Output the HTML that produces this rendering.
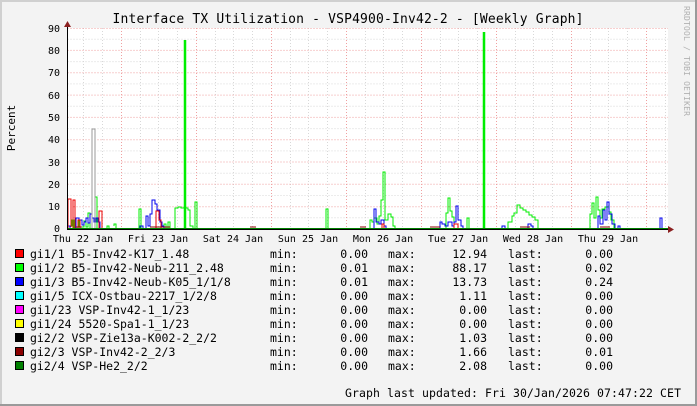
<!DOCTYPE html>
<html><head><meta charset="utf-8"><style>
html,body{margin:0;padding:0;background:#f3f3f3}
svg{display:block}
text{font-family:"DejaVu Sans Mono","Liberation Mono",monospace;fill:#000}
</style></head><body>
<svg width="697" height="406" xmlns="http://www.w3.org/2000/svg">
<rect x="0" y="0" width="697" height="406" fill="#f3f3f3"/>
<rect x="0" y="0" width="697" height="2" fill="#d0d0d0"/>
<rect x="0" y="0" width="2" height="406" fill="#d0d0d0"/>
<rect x="0" y="404" width="697" height="2" fill="#9a9a9a"/>
<rect x="695" y="0" width="2" height="406" fill="#9a9a9a"/>
<rect x="67" y="28" width="601" height="201" fill="#fff"/>
<g stroke="#d8d8d8" stroke-dasharray="1,2" stroke-width="1">
<path d="M67.5 217.8H668M67.5 195.5H668M67.5 173.2H668M67.5 150.9H668M67.5 128.6H668M67.5 106.2H668M67.5 83.9H668M67.5 61.6H668M67.5 39.3H668"/>
<path d="M83.5 28V229M102.5 28V229M140.5 28V229M158.5 28V229M177.5 28V229M215.5 28V229M233.5 28V229M252.5 28V229M290.5 28V229M308.5 28V229M327.5 28V229M365.5 28V229M383.5 28V229M402.5 28V229M440.5 28V229M458.5 28V229M477.5 28V229M515.5 28V229M533.5 28V229M552.5 28V229M590.5 28V229M608.5 28V229M627.5 28V229M665.5 28V229"/>
</g>
<g stroke="#f0a0a0" stroke-dasharray="1,2" stroke-width="1">
<path d="M67.5 206.7H668M67.5 184.3H668M67.5 162H668M67.5 139.7H668M67.5 117.4H668M67.5 95.1H668M67.5 72.8H668M67.5 50.4H668M67.5 28.5H668"/>
<path d="M121.5 28V229M196.5 28V229M271.5 28V229M346.5 28V229M421.5 28V229M496.5 28V229M571.5 28V229M646.5 28V229"/>
</g>
<g fill="none" stroke-width="1">
<path stroke="#00ee00" d="M68 228V226H72V220H74V228M76 228V218H79V227H84V221H86V227H88V213H90V228M95 228V197H97V228M107 228V226H109V228M114 226V224H116V228M139 228V209H141V228M164 228V224H166V228M168 228V222H170V228M175 228V208H178V207H181V208H184V207H186V208H188V210H190V226H193V228M195 228V202H197V228M326 228V209H328V228M370 228V220H372V222H374V218H377V224H379V216H381V200H383V172H385V220H388V214H391V217H393V226H395V228M446 228V213H448V198H450V211H452V217H454V228M467 228V218H469V228M508 228V222H512V216H514V213H517V205H520V208H523V210H526V212H529V215H532V217H535V220H538V228M590 228V214H592V203H594V218H596V197H598V210H600V218H602V209H605V207H609V212H611V220H614V228"/>
<path stroke="#00ee00" stroke-width="2.5" d="M185 228V40M484 228V32"/>
<path stroke="#0000ee" d="M68 228V226H70V228M76 228V218H79V220H82V225H84V222H86V218H88V223H90V214H92V218H94V222H96V218H98V222H100V228M140 228V226H143V228M146 228V216H148V226H150V214H152V200H155V204H157V210H160V222H162V226H164V228M374 228V209H376V222H379V224H381V220H384V226H386V228M440 228V222H442V224H445V226H448V222H452V226H454V222H456V206H458V220H461V226H463V228M502 228V226H505V228M528 228V224H531V226H533V228M598 228V216H600V224H603V210H605V220H607V202H609V214H612V224H615V228M618 228V226H620V228M660 228V218H662V228"/>
<path stroke="#ee0000" d="M68 228V199H71V227M73 228V200H75V228M78 228V220H80V228M99 228V211H102V228M156 228V211H159V220H161V228M382 228V224H384V228M454 228V224H458V228"/>
<path stroke="#999" d="M92 228V129H95V228"/>
<path stroke="#8b0000" d="M76 227H82M150 227H170M250 227H256M360 227H366M430 227H440M520 227H530M600 227H610"/>
<path stroke="#008000" d="M67 228.5H668"/>
</g>
<path d="M67.5 229V24M67 229.5H670" stroke="#000" stroke-width="1"/>
<path d="M64 27L67.5 21L71 27Z" fill="#8b2020"/>
<path d="M668 226L674 229.5L668 233Z" fill="#8b2020"/>
<g font-size="10" text-anchor="end">
<text x="60" y="32">90</text><text x="60" y="54">80</text><text x="60" y="76">70</text><text x="60" y="99">60</text><text x="60" y="121">50</text><text x="60" y="143">40</text><text x="60" y="166">30</text><text x="60" y="188">20</text><text x="60" y="210">10</text><text x="60" y="232">0</text>
</g>
<g font-size="10" text-anchor="middle">
<text x="83" y="242">Thu 22 Jan</text><text x="158" y="242">Fri 23 Jan</text><text x="233" y="242">Sat 24 Jan</text><text x="308" y="242">Sun 25 Jan</text><text x="383" y="242">Mon 26 Jan</text><text x="458" y="242">Tue 27 Jan</text><text x="533" y="242">Wed 28 Jan</text><text x="608" y="242">Thu 29 Jan</text>
</g>
<text x="348" y="23" font-size="13" text-anchor="middle" textLength="471">Interface TX Utilization - VSP4900-Inv42-2 - [Weekly Graph]</text>
<text transform="translate(15,128) rotate(-90)" font-size="11" text-anchor="middle">Percent</text>
<text transform="translate(684,6) rotate(90)" font-size="8" style="fill:#b0b0b0" textLength="110">RRDTOOL / TOBI OETIKER</text>
<g stroke="#000" stroke-width="1">
<rect x="15.5" y="249.5" width="8" height="8" fill="#ff0000"/>
<rect x="15.5" y="263.5" width="8" height="8" fill="#00ff00"/>
<rect x="15.5" y="277.5" width="8" height="8" fill="#0000ff"/>
<rect x="15.5" y="291.5" width="8" height="8" fill="#00ffff"/>
<rect x="15.5" y="305.5" width="8" height="8" fill="#ff00ff"/>
<rect x="15.5" y="319.5" width="8" height="8" fill="#ffff00"/>
<rect x="15.5" y="333.5" width="8" height="8" fill="#000000"/>
<rect x="15.5" y="347.5" width="8" height="8" fill="#8b0000"/>
<rect x="15.5" y="361.5" width="8" height="8" fill="#008000"/>
</g>
<g font-size="11.5">
<text x="30" y="258">gi1/1 B5-Inv42-K17_1.48</text>
<text x="30" y="272">gi1/2 B5-Inv42-Neub-211_2.48</text>
<text x="30" y="286">gi1/3 B5-Inv42-Neub-K05_1/1/8</text>
<text x="30" y="300">gi1/5 ICX-Ostbau-2217_1/2/8</text>
<text x="30" y="314">gi1/23 VSP-Inv42-1_1/23</text>
<text x="30" y="328">gi1/24 5520-Spa1-1_1/23</text>
<text x="30" y="342">gi2/2 VSP-Zie13a-K002-2_2/2</text>
<text x="30" y="356">gi2/3 VSP-Inv42-2_2/3</text>
<text x="30" y="370">gi2/4 VSP-He2_2/2</text>
</g>
<g font-size="11.5">
<g><text x="270" y="258">min:</text><text x="270" y="272">min:</text><text x="270" y="286">min:</text><text x="270" y="300">min:</text><text x="270" y="314">min:</text><text x="270" y="328">min:</text><text x="270" y="342">min:</text><text x="270" y="356">min:</text><text x="270" y="370">min:</text></g>
<g text-anchor="end"><text x="368" y="258">0.00</text><text x="368" y="272">0.01</text><text x="368" y="286">0.01</text><text x="368" y="300">0.00</text><text x="368" y="314">0.00</text><text x="368" y="328">0.00</text><text x="368" y="342">0.00</text><text x="368" y="356">0.00</text><text x="368" y="370">0.00</text></g>
<g><text x="388" y="258">max:</text><text x="388" y="272">max:</text><text x="388" y="286">max:</text><text x="388" y="300">max:</text><text x="388" y="314">max:</text><text x="388" y="328">max:</text><text x="388" y="342">max:</text><text x="388" y="356">max:</text><text x="388" y="370">max:</text></g>
<g text-anchor="end"><text x="487" y="258">12.94</text><text x="487" y="272">88.17</text><text x="487" y="286">13.73</text><text x="487" y="300">1.11</text><text x="487" y="314">0.00</text><text x="487" y="328">0.00</text><text x="487" y="342">1.03</text><text x="487" y="356">1.66</text><text x="487" y="370">2.08</text></g>
<g><text x="508" y="258">last:</text><text x="508" y="272">last:</text><text x="508" y="286">last:</text><text x="508" y="300">last:</text><text x="508" y="314">last:</text><text x="508" y="328">last:</text><text x="508" y="342">last:</text><text x="508" y="356">last:</text><text x="508" y="370">last:</text></g>
<g text-anchor="end"><text x="613" y="258">0.00</text><text x="613" y="272">0.02</text><text x="613" y="286">0.24</text><text x="613" y="300">0.00</text><text x="613" y="314">0.00</text><text x="613" y="328">0.00</text><text x="613" y="342">0.00</text><text x="613" y="356">0.01</text><text x="613" y="370">0.00</text></g>
<text x="345" y="397" textLength="336">Graph last updated: Fri 30/Jan/2026 07:47:22 CET</text>
</g>
</svg>
</body></html>
